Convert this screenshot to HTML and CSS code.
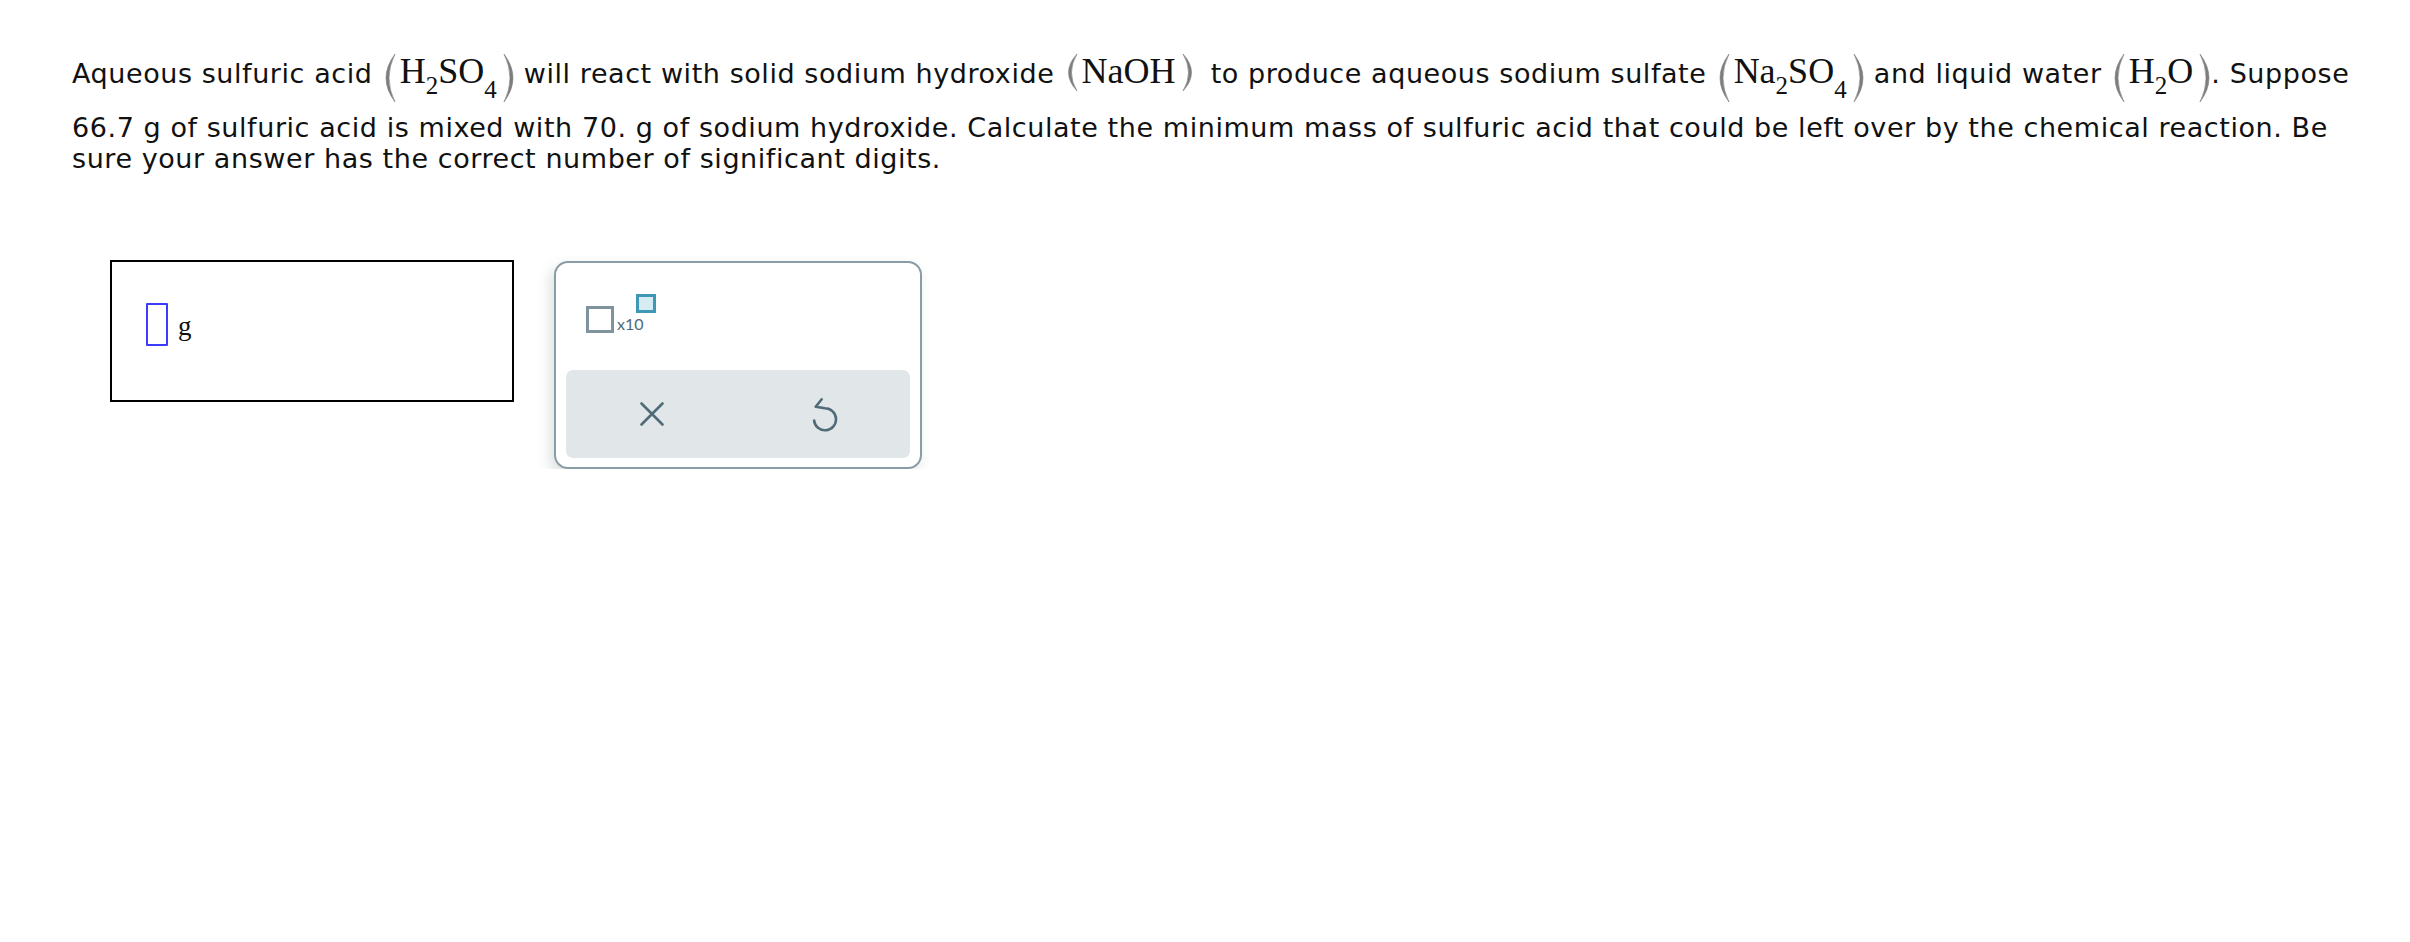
FILE: index.html
```html
<!DOCTYPE html>
<html lang="en">
<head>
<meta charset="utf-8">
<title>Question</title>
<link rel="stylesheet" href="styles.css">
</head>
<body>
<div class="page">
  <p class="question">Aqueous sulfuric acid <span class="chem"><svg class="paren" viewBox="0 0 13 50"><path d="M11 1 Q-7 25 11 49 Q-1 25 11 1 Z"/></svg><span class="formula">H<sub>2</sub>SO<sub class="deep">4</sub></span><svg class="paren" viewBox="0 0 13 50"><path d="M2 1 Q20 25 2 49 Q14 25 2 1 Z"/></svg></span> will react with solid sodium hydroxide <span class="chem wide"><svg class="paren short" viewBox="0 0 13 39"><path d="M11 1 Q-6 19.5 11 38 Q0 19.5 11 1 Z"/></svg><span class="formula">NaOH</span><svg class="paren short" viewBox="0 0 13 39"><path d="M2 1 Q19 19.5 2 38 Q13 19.5 2 1 Z"/></svg></span> to produce aqueous sodium sulfate <span class="chem"><svg class="paren" viewBox="0 0 13 50"><path d="M11 1 Q-7 25 11 49 Q-1 25 11 1 Z"/></svg><span class="formula">Na<sub>2</sub>SO<sub class="deep">4</sub></span><svg class="paren" viewBox="0 0 13 50"><path d="M2 1 Q20 25 2 49 Q14 25 2 1 Z"/></svg></span> and liquid water <span class="chem"><svg class="paren" viewBox="0 0 13 50"><path d="M11 1 Q-7 25 11 49 Q-1 25 11 1 Z"/></svg><span class="formula">H<sub>2</sub>O</span><svg class="paren" viewBox="0 0 13 50"><path d="M2 1 Q20 25 2 49 Q14 25 2 1 Z"/></svg></span>. Suppose 66.7 g of sulfuric acid is mixed with 70. g of sodium hydroxide. Calculate the minimum mass of sulfuric acid that could be left over by the chemical reaction. Be sure your answer has the correct number of significant digits.</p>

  <div class="work">
    <div class="answer">
      <span class="slot"></span>
      <span class="unit">g</span>
    </div>

    <div class="panel">
      <div class="tools">
        <div class="sci">
          <span class="base"></span>
          <span class="ten">x10</span>
          <span class="exp"></span>
        </div>
      </div>
      <div class="keys">
        <div class="key">
          <svg class="icon-x" width="26" height="26" viewBox="0 0 26 26"><path d="M2.5 2.5 L23.5 23.5 M23.5 2.5 L2.5 23.5"/></svg>
        </div>
        <div class="key">
          <svg class="icon-undo" width="30" height="36" viewBox="0 0 30 36"><path d="M12.7 3.3 L6.7 10.7 L16 12.3 A11 11 0 1 1 5.1 24.5"/></svg>
        </div>
      </div>
    </div>
  </div>
</div>
</body>
</html>
```

FILE: styles.css
```css
* {
  box-sizing: border-box;
}

body {
  margin: 0;
  background: #ffffff;
  font-family: "DejaVu Sans", Verdana, sans-serif;
  color: #111111;
}

.page {
  padding: 53px 0 0 72px;
}

.question {
  margin: 0;
  width: 2300px;
  font-size: 27px;
  line-height: 31px;
  letter-spacing: 0.57px;
}

.chem {
  display: inline-block;
  white-space: nowrap;
  line-height: 36px;
  padding-bottom: 9px;
  margin-left: 2px;
  letter-spacing: 0;
}

.chem.wide {
  margin-right: 8px;
}

.paren {
  display: inline-block;
  width: 13px;
  height: 50px;
  vertical-align: -20px;
  fill: #7d7d7d;
  stroke: #7d7d7d;
  stroke-width: 0.6;
}

.paren.short {
  height: 39px;
  vertical-align: -9px;
}

.formula {
  font-family: "Liberation Serif", "Times New Roman", serif;
  font-size: 36px;
  color: #111111;
  padding: 0 5px 0 3px;
}

.formula sub {
  font-size: 25px;
  line-height: 0;
  vertical-align: -11px;
}

.formula sub.deep {
  vertical-align: -15px;
}

.work {
  display: flex;
  align-items: flex-start;
  gap: 40px;
  margin: 86px 0 0 38px;
}

.answer {
  width: 404px;
  height: 142px;
  border: 2px solid #000000;
  display: flex;
  align-items: flex-start;
  padding: 41px 0 0 34px;
}

.slot {
  width: 22px;
  height: 43px;
  border: 2px solid #3b3bff;
  border-radius: 1px;
}

.unit {
  font-family: "Liberation Serif", "Times New Roman", serif;
  font-size: 27px;
  line-height: 27px;
  margin: 10px 0 0 10px;
  color: #111111;
}

.panel {
  width: 368px;
  height: 208px;
  margin-top: 1px;
  border: 2px solid #8a9ca5;
  border-radius: 14px;
  background: #ffffff;
  padding: 10px 10px 9px;
  display: flex;
  flex-direction: column;
  box-shadow: -4px 6px 14px rgba(40, 60, 70, 0.16);
}

.tools {
  height: 97px;
  padding: 21px 0 0 20px;
}

.sci {
  display: flex;
  align-items: flex-end;
  height: 39px;
}

.base {
  width: 28px;
  height: 27px;
  border: 3px solid #7f939c;
}

.ten {
  font-family: Lato, "Open Sans", sans-serif;
  font-size: 16px;
  line-height: 16px;
  color: #4f6a76;
  margin: 0 0 1px 3px;
}

.exp {
  align-self: flex-start;
  width: 20px;
  height: 19px;
  border: 3px solid #3d97b5;
  background: #d5ecf2;
  margin-left: -8px;
}

.keys {
  flex: 1;
  display: flex;
  background: #e1e6e9;
  border-radius: 7px;
}

.key {
  flex: 1;
  display: flex;
  align-items: center;
  justify-content: center;
}

.icon-x path,
.icon-undo path {
  fill: none;
  stroke: #4f6b78;
  stroke-width: 2.6;
  stroke-linecap: round;
  stroke-linejoin: round;
}
```
